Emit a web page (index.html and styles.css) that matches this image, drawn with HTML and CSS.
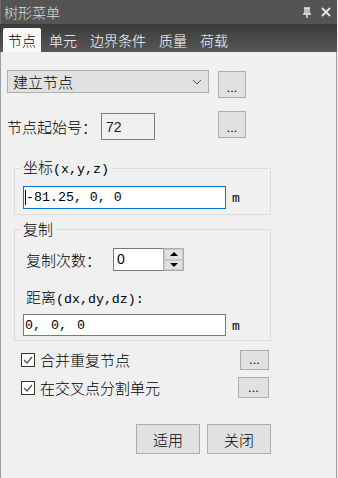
FILE: index.html
```html
<!DOCTYPE html>
<html lang="zh-CN">
<head>
  <meta charset="UTF-8">
  <meta name="viewport" content="width=device-width, initial-scale=1.0">
  <title>树形菜单</title>
  <link rel="stylesheet" href="styles.css">
</head>
<body>
  <div id="panel">
    <!-- 标题栏 -->
    <div class="titlebar">
      <span class="title">树形菜单</span>
      <span class="title-icons">
        <svg width="10" height="11" viewBox="0 0 10 11"><path d="M2 1h6M3 1v6M7 1v6M5 1v6M1 7h8M5 7v4" stroke="#e6e6e6" stroke-width="1.4" fill="none"/></svg>
        <svg width="10" height="10" viewBox="0 0 10 10"><path d="M1 1L9 9M9 1L1 9" stroke="#e6e6e6" stroke-width="1.8"/></svg>
      </span>
    </div>

    <!-- 选项卡 -->
    <div class="tabs">
      <div class="tab active">节点</div>
      <div class="tab">单元</div>
      <div class="tab">边界条件</div>
      <div class="tab">质量</div>
      <div class="tab">荷载</div>
    </div>

    <div class="content">
      <div class="row row-type">
        <div class="select">
          <span>建立节点</span>
          <svg width="10" height="6" viewBox="0 0 10 6"><path d="M1 1l4 4 4-4" stroke="#555" stroke-width="1" fill="none"/></svg>
        </div>
        <button class="dots btn-type">...</button>
      </div>

      <div class="row row-start">
        <span class="label">节点起始号：</span>
        <div class="box box-start">72</div>
        <button class="dots">...</button>
      </div>

      <fieldset class="group group-coord">
        <legend>坐标<span class="latin">(x,y,z)</span></legend>
        <div class="row">
          <div class="box box-wide focused"><span class="caret"></span>-81.25, 0, 0</div>
          <span class="unit">m</span>
        </div>
      </fieldset>

      <fieldset class="group group-copy">
        <legend>复制</legend>
        <div class="row row-count">
          <span class="label label-in">复制次数：</span>
          <div class="spinner">
            <div class="spin-text">0</div>
            <div class="spin-btns">
              <div class="spin-btn"><span class="tri-up"></span></div>
              <div class="spin-btn"><span class="tri-down"></span></div>
            </div>
          </div>
        </div>
        <div class="label label-in label-dist">距离<span class="latin">(dx,dy,dz):</span></div>
        <div class="row">
          <div class="box box-wide box-dist">0, 0, 0</div>
          <span class="unit">m</span>
        </div>
      </fieldset>

      <div class="check-row check-first">
        <span class="checkbox"><svg width="12" height="12" viewBox="0 0 12 12"><path d="M2 6l3 3 5-6" stroke="#555" stroke-width="1.3" fill="none"/></svg></span>
        <span class="check-label">合并重复节点</span>
        <button class="dots btn-small">...</button>
      </div>
      <div class="check-row check-second">
        <span class="checkbox"><svg width="12" height="12" viewBox="0 0 12 12"><path d="M2 6l3 3 5-6" stroke="#555" stroke-width="1.3" fill="none"/></svg></span>
        <span class="check-label">在交叉点分割单元</span>
        <button class="dots btn-small btn-wider">...</button>
      </div>

      <div class="actions">
        <button class="action">适用</button>
        <button class="action">关闭</button>
      </div>
    </div>
  </div>
</body>
</html>
```

FILE: styles.css
```css
* {
  margin: 0;
  padding: 0;
  box-sizing: border-box;
  font-family: "Noto Sans CJK SC", sans-serif;
  font-weight: 300;
}

body {
  width: 338px;
  height: 478px;
  background: #f0f0f0;
  overflow: hidden;
}

#panel {
  width: 337px;
  height: 478px;
  display: flex;
  flex-direction: column;
}

.titlebar {
  height: 24px;
  background: #545454;
  border-left: 1px solid #6a6a6a;
  display: flex;
  align-items: center;
  justify-content: space-between;
  padding: 0 6px 0 3px;
}

.title {
  color: #dcdcdc;
  font-size: 14px;
  line-height: 24px;
}

.title-icons {
  display: flex;
  align-items: center;
  gap: 9px;
}

.tabs {
  height: 28px;
  background: linear-gradient(#3a3a3a, #575757);
  display: flex;
  align-items: flex-end;
  padding-left: 3px;
  gap: 1px;
}

.tab {
  height: 24px;
  line-height: 24px;
  padding: 0 6px;
  color: #ffffff;
  font-size: 14px;
}

.tab.active {
  background: #f8f8f8;
  color: #000;
  padding: 0 5px;
  margin-right: 1px;
  border-radius: 2px 2px 0 0;
}

.content {
  flex: 1;
  background: #f0f0f0;
  border-left: 1px solid #a0a0a0;
  border-right: 1px solid #a0a0a0;
  padding-left: 6px;
}

.row {
  display: flex;
  align-items: flex-start;
}

.row-type {
  margin-top: 18px;
}

.select {
  width: 202px;
  height: 23px;
  background: #e1e1e1;
  border: 1px solid #adadad;
  display: flex;
  align-items: center;
  justify-content: space-between;
  padding: 0 6px 0 5px;
  font-size: 15px;
}

button {
  font-family: "Noto Sans CJK SC", sans-serif;
  background: #e1e1e1;
  border: 1px solid #adadad;
  color: #000;
}

.dots {
  width: 28px;
  height: 27px;
  margin-left: 9px;
  font-family: "Liberation Sans", sans-serif;
  font-size: 13px;
  font-weight: normal;
  padding-top: 5px;
}

.btn-type {
  margin-top: 1px;
}

.row-start {
  margin-top: 13px;
}

.label {
  font-size: 15px;
  line-height: 18px;
  color: #000;
}

.row-start .label {
  margin-top: 7px;
  width: 94px;
}

.box {
  background: #fff;
  border: 1px solid #7a7a7a;
  font-family: "Liberation Sans", "Noto Sans CJK SC", sans-serif;
  font-size: 14px;
  display: flex;
  align-items: center;
  padding-left: 4px;
}

.box-start {
  width: 54px;
  height: 27px;
  margin-top: 2px;
  background: #f0f0f0;
  color: #222;
}

.row-start .dots {
  margin-left: 63px;
}

.group {
  border: 1px solid #dcdcdc;
  margin-left: 7px;
  width: 257px;
  padding: 7px 0 5px 8px;
}

.group legend {
  font-size: 15px;
  line-height: 18px;
  padding: 0 3px;
  margin-left: -3px;
}

.latin {
  font-family: "Liberation Mono", monospace;
  font-size: 13.3px;
}

.group-coord {
  margin-top: 18px;
}

.box-wide {
  width: 203px;
  height: 23px;
  font-family: "Liberation Mono", "Noto Sans CJK SC", monospace;
  font-size: 13.3px;
  padding-left: 1px;
}

.focused {
  border-color: #0078d7;
}

.caret {
  width: 1px;
  height: 15px;
  background: #000;
}

.unit {
  font-family: "Liberation Mono", monospace;
  font-size: 13px;
  margin-left: 6px;
  margin-top: 5px;
}

.group-copy {
  margin-top: 5px;
  padding: 10px 0 4px 8px;
}

.label-in {
  padding-left: 3px;
}

.row-count {
  align-items: center;
}

.row-count .label {
  width: 90px;
}

.spinner {
  display: flex;
  height: 23px;
}

.spin-text {
  width: 50px;
  height: 23px;
  background: #fff;
  border: 1px solid #7a7a7a;
  border-right: none;
  font-family: "Liberation Sans", sans-serif;
  font-size: 14px;
  line-height: 21px;
  padding-left: 3px;
}

.spin-btns {
  width: 21px;
  display: flex;
  flex-direction: column;
  border: 1px solid #adadad;
  background: #e1e1e1;
}

.spin-btn {
  flex: 1;
  display: flex;
  align-items: center;
  justify-content: center;
  border: 1px solid #c8c8c8;
}

.tri-up {
  border-left: 4px solid transparent;
  border-right: 4px solid transparent;
  border-bottom: 4px solid #000;
}

.tri-down {
  border-left: 4px solid transparent;
  border-right: 4px solid transparent;
  border-top: 4px solid #000;
}

.label-dist {
  margin: 17px 0 5px;
}

.box-dist {
  height: 22px;
  word-spacing: 2px;
}

.check-row {
  display: flex;
  align-items: center;
  height: 21px;
  padding-left: 14px;
}

.check-first {
  margin-top: 8px;
}

.check-second {
  margin-top: 7px;
}

.checkbox {
  width: 14px;
  height: 14px;
  border: 1px solid #333;
  background: #fff;
  display: flex;
  align-items: center;
  justify-content: center;
}

.check-label {
  font-size: 15px;
  margin-left: 5px;
  flex: 1;
}

.btn-small {
  width: 29px;
  height: 20px;
  margin-left: 0;
  margin-right: 67px;
  padding-top: 0;
}

.btn-wider {
  width: 31px;
  height: 21px;
}

.actions {
  display: flex;
  gap: 7px;
  margin-top: 26px;
  padding-left: 129px;
}

.action {
  width: 64px;
  height: 30px;
  font-size: 15px;
}
```
